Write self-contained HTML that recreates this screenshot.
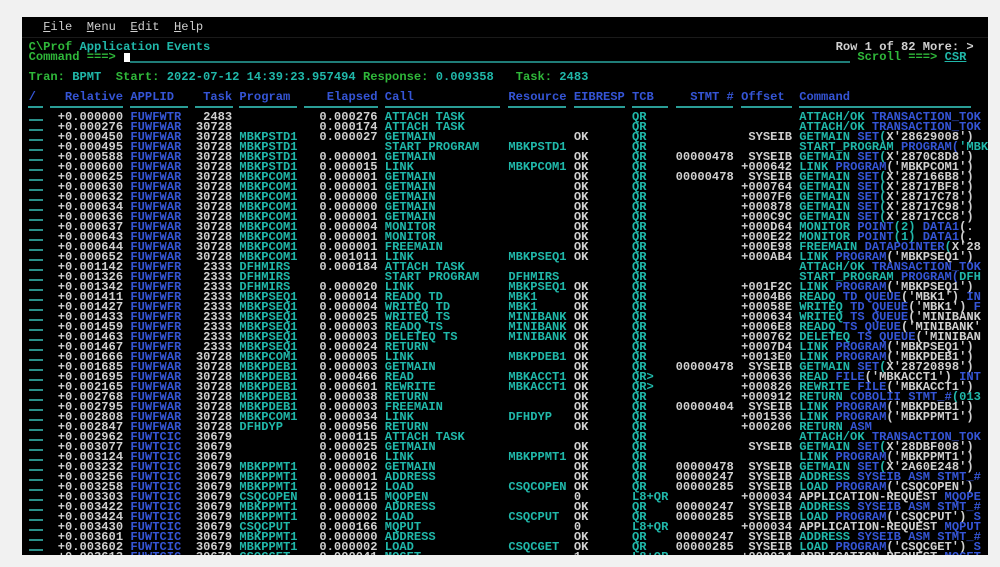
<!DOCTYPE html>
<html><head><meta charset="utf-8"><style>
html,body{margin:0;padding:0}
body{width:1000px;height:567px;background:#f1f1f1;overflow:hidden;position:relative}
#scr{position:absolute;left:22px;top:17px;width:966px;height:538px;background:#000;overflow:hidden;font-family:"Liberation Mono",monospace;font-size:12.12px;font-weight:bold;line-height:10px;color:#d0d0d0;white-space:pre}
#scr div,#scr span,#scr i{position:absolute}
.rw{left:0;width:966px;height:10px}
.g{color:#2fb83a}.k{color:#20b8aa}.bl{color:#3555d6}.w{color:#d0d0d0}
b{font-weight:bold;color:#3555d6}em{font-style:normal;color:#d0d0d0}
.mk{left:6.6px;top:7px;width:14px;height:2px;background:#2a8f89}
.r{left:35.7px;width:65.4px;text-align:right}
.a{left:108.4px;color:#3555d6}
.t{left:173.8px;width:36.4px;text-align:right}
.p{left:217.4px;color:#20b8aa}
.e{left:297.4px}
.c{left:362.8px;color:#20b8aa}
.rs{left:486.4px;color:#20b8aa}
.eb{left:551.9px}
.tc{left:610px;color:#20b8aa}
.s{left:653.6px}
.o{left:719.1px;width:50.9px;text-align:right}
.cm{left:777.2px;color:#20b8aa}
.ul{position:absolute;top:89px;height:2px;background:#2a9d96}
</style></head><body>
<div id="scr">
<div class="rw" style="top:5px;left:6.6px;color:#cfcfcf;font-weight:normal">  <u>F</u>ile  <u>M</u>enu  <u>E</u>dit  <u>H</u>elp</div>
<div style="left:0;top:20px;width:966px;height:1px;background:#1a1a1a"></div>
<div class="rw" style="top:25px;left:6.6px"><span class="g" style="left:0">C\Prof</span><span class="k" style="left:50.9px">Application Events</span></div>
<div class="rw" style="top:35px;left:6.6px"><span class="g" style="left:0">Command ===&gt;</span></div>
<div style="left:101.5px;top:36px;width:6px;height:9px;background:#fff"></div>
<div style="left:108px;top:44px;width:720px;height:2px;background:#1f7d78"></div>
<div class="rw" style="top:25px;left:813.6px">Row 1 of 82 More: &gt;</div>
<div class="rw" style="top:35px;left:835.4px"><span class="g" style="left:0">Scroll ===&gt;</span><span class="k" style="left:87.2px;text-decoration:underline">CSR</span></div>
<div class="rw" style="top:55px;left:6.6px"><span class="g" style="left:0">Tran:</span><span class="k" style="left:43.6px">BPMT</span><span class="g" style="left:87.2px">Start:</span><span class="k" style="left:138.1px">2022-07-12 14:39:23.957494</span><span class="g" style="left:334.4px">Response:</span><span class="k" style="left:407.1px">0.009358</span><span class="g" style="left:487.1px">Task:</span><span class="k" style="left:530.7px">2483</span></div>
<div class="rw bl" style="top:75px"><span style="left:6.6px">/</span><span style="left:42.9px">Relative</span><span style="left:108.4px">APPLID</span><span style="left:181.1px">Task</span><span style="left:217.4px">Program</span><span style="left:304.7px">Elapsed</span><span style="left:362.8px">Call</span><span style="left:486.4px">Resource</span><span style="left:551.9px">EIBRESP</span><span style="left:610px">TCB</span><span style="left:668.2px">STMT #</span><span style="left:719.1px">Offset</span><span style="left:777.2px">Command</span></div>
<div class="ul" style="left:6px;width:15px"></div>
<div class="ul" style="left:28px;width:73px"></div>
<div class="ul" style="left:108px;width:58px"></div>
<div class="ul" style="left:173px;width:38px"></div>
<div class="ul" style="left:217px;width:58px"></div>
<div class="ul" style="left:282px;width:74px"></div>
<div class="ul" style="left:363px;width:115px"></div>
<div class="ul" style="left:486px;width:58px"></div>
<div class="ul" style="left:552px;width:51px"></div>
<div class="ul" style="left:610px;width:36px"></div>
<div class="ul" style="left:654px;width:57px"></div>
<div class="ul" style="left:719px;width:51px"></div>
<div class="ul" style="left:777px;width:172px"></div>

<div class="rw" style="top:95px"><i class="mk"></i><span class="r">+0.000000</span><span class="a">FUWFWTR</span><span class="t">2483</span><span class="e">0.000276</span><span class="c">ATTACH TASK</span><span class="tc">QR</span><span class="cm">ATTACH/OK <b>TRANSACTION_TOK</b></span></div>
<div class="rw" style="top:105px"><i class="mk"></i><span class="r">+0.000276</span><span class="a">FUWFWAR</span><span class="t">30728</span><span class="e">0.000174</span><span class="c">ATTACH TASK</span><span class="tc">QR</span><span class="cm">ATTACH/OK <b>TRANSACTION_TOK</b></span></div>
<div class="rw" style="top:115px"><i class="mk"></i><span class="r">+0.000450</span><span class="a">FUWFWAR</span><span class="t">30728</span><span class="p">MBKPSTD1</span><span class="e">0.000027</span><span class="c">GETMAIN</span><span class="eb">OK</span><span class="tc">QR</span><span class="o">SYSEIB</span><span class="cm">GETMAIN <b>SET</b>(<em>X'28629008')</em></span></div>
<div class="rw" style="top:125px"><i class="mk"></i><span class="r">+0.000495</span><span class="a">FUWFWAR</span><span class="t">30728</span><span class="p">MBKPSTD1</span><span class="c">START PROGRAM</span><span class="rs">MBKPSTD1</span><span class="tc">QR</span><span class="cm">START_PROGRAM <b>PROGRAM(</b>'MBK</span></div>
<div class="rw" style="top:135px"><i class="mk"></i><span class="r">+0.000588</span><span class="a">FUWFWAR</span><span class="t">30728</span><span class="p">MBKPSTD1</span><span class="e">0.000001</span><span class="c">GETMAIN</span><span class="eb">OK</span><span class="tc">QR</span><span class="s">00000478</span><span class="o">SYSEIB</span><span class="cm">GETMAIN <b>SET</b>(<em>X'2870C8D8')</em></span></div>
<div class="rw" style="top:145px"><i class="mk"></i><span class="r">+0.000600</span><span class="a">FUWFWAR</span><span class="t">30728</span><span class="p">MBKPSTD1</span><span class="e">0.000015</span><span class="c">LINK</span><span class="rs">MBKPCOM1</span><span class="eb">OK</span><span class="tc">QR</span><span class="o">+000642</span><span class="cm">LINK <b>PROGRAM</b><em>('MBKPCOM1')</em></span></div>
<div class="rw" style="top:155px"><i class="mk"></i><span class="r">+0.000625</span><span class="a">FUWFWAR</span><span class="t">30728</span><span class="p">MBKPCOM1</span><span class="e">0.000001</span><span class="c">GETMAIN</span><span class="eb">OK</span><span class="tc">QR</span><span class="s">00000478</span><span class="o">SYSEIB</span><span class="cm">GETMAIN <b>SET</b>(<em>X'287166B8')</em></span></div>
<div class="rw" style="top:165px"><i class="mk"></i><span class="r">+0.000630</span><span class="a">FUWFWAR</span><span class="t">30728</span><span class="p">MBKPCOM1</span><span class="e">0.000001</span><span class="c">GETMAIN</span><span class="eb">OK</span><span class="tc">QR</span><span class="o">+000764</span><span class="cm">GETMAIN <b>SET</b>(<em>X'28717BF8')</em></span></div>
<div class="rw" style="top:175px"><i class="mk"></i><span class="r">+0.000632</span><span class="a">FUWFWAR</span><span class="t">30728</span><span class="p">MBKPCOM1</span><span class="e">0.000000</span><span class="c">GETMAIN</span><span class="eb">OK</span><span class="tc">QR</span><span class="o">+0007F6</span><span class="cm">GETMAIN <b>SET</b>(<em>X'28717C78')</em></span></div>
<div class="rw" style="top:185px"><i class="mk"></i><span class="r">+0.000634</span><span class="a">FUWFWAR</span><span class="t">30728</span><span class="p">MBKPCOM1</span><span class="e">0.000000</span><span class="c">GETMAIN</span><span class="eb">OK</span><span class="tc">QR</span><span class="o">+000878</span><span class="cm">GETMAIN <b>SET</b>(<em>X'28717C98')</em></span></div>
<div class="rw" style="top:195px"><i class="mk"></i><span class="r">+0.000636</span><span class="a">FUWFWAR</span><span class="t">30728</span><span class="p">MBKPCOM1</span><span class="e">0.000001</span><span class="c">GETMAIN</span><span class="eb">OK</span><span class="tc">QR</span><span class="o">+000C9C</span><span class="cm">GETMAIN <b>SET</b>(<em>X'28717CC8')</em></span></div>
<div class="rw" style="top:205px"><i class="mk"></i><span class="r">+0.000637</span><span class="a">FUWFWAR</span><span class="t">30728</span><span class="p">MBKPCOM1</span><span class="e">0.000004</span><span class="c">MONITOR</span><span class="eb">OK</span><span class="tc">QR</span><span class="o">+000D64</span><span class="cm">MONITOR <b>POINT</b>(2) <b>DATA1</b><em>(.</em></span></div>
<div class="rw" style="top:215px"><i class="mk"></i><span class="r">+0.000643</span><span class="a">FUWFWAR</span><span class="t">30728</span><span class="p">MBKPCOM1</span><span class="e">0.000001</span><span class="c">MONITOR</span><span class="eb">OK</span><span class="tc">QR</span><span class="o">+000E22</span><span class="cm">MONITOR <b>POINT</b>(1) <b>DATA1</b><em>(.</em></span></div>
<div class="rw" style="top:225px"><i class="mk"></i><span class="r">+0.000644</span><span class="a">FUWFWAR</span><span class="t">30728</span><span class="p">MBKPCOM1</span><span class="e">0.000001</span><span class="c">FREEMAIN</span><span class="eb">OK</span><span class="tc">QR</span><span class="o">+000E98</span><span class="cm">FREEMAIN <b>DATAPOINTER</b>(<em>X'28</em></span></div>
<div class="rw" style="top:235px"><i class="mk"></i><span class="r">+0.000652</span><span class="a">FUWFWAR</span><span class="t">30728</span><span class="p">MBKPCOM1</span><span class="e">0.001011</span><span class="c">LINK</span><span class="rs">MBKPSEQ1</span><span class="eb">OK</span><span class="tc">QR</span><span class="o">+000AB4</span><span class="cm">LINK <b>PROGRAM</b><em>('MBKPSEQ1')</em></span></div>
<div class="rw" style="top:245px"><i class="mk"></i><span class="r">+0.001142</span><span class="a">FUWFWFR</span><span class="t">2333</span><span class="p">DFHMIRS</span><span class="e">0.000184</span><span class="c">ATTACH TASK</span><span class="tc">QR</span><span class="cm">ATTACH/OK <b>TRANSACTION_TOK</b></span></div>
<div class="rw" style="top:255px"><i class="mk"></i><span class="r">+0.001326</span><span class="a">FUWFWFR</span><span class="t">2333</span><span class="p">DFHMIRS</span><span class="c">START PROGRAM</span><span class="rs">DFHMIRS</span><span class="tc">QR</span><span class="cm">START_PROGRAM <b>PROGRAM(</b>DFH</span></div>
<div class="rw" style="top:265px"><i class="mk"></i><span class="r">+0.001342</span><span class="a">FUWFWFR</span><span class="t">2333</span><span class="p">DFHMIRS</span><span class="e">0.000020</span><span class="c">LINK</span><span class="rs">MBKPSEQ1</span><span class="eb">OK</span><span class="tc">QR</span><span class="o">+001F2C</span><span class="cm">LINK <b>PROGRAM</b><em>('MBKPSEQ1')</em></span></div>
<div class="rw" style="top:275px"><i class="mk"></i><span class="r">+0.001411</span><span class="a">FUWFWFR</span><span class="t">2333</span><span class="p">MBKPSEQ1</span><span class="e">0.000014</span><span class="c">READQ TD</span><span class="rs">MBK1</span><span class="eb">OK</span><span class="tc">QR</span><span class="o">+0004B6</span><span class="cm">READQ <b>TD QUEUE</b><em>('MBK1')</em> <b>IN</b></span></div>
<div class="rw" style="top:285px"><i class="mk"></i><span class="r">+0.001427</span><span class="a">FUWFWFR</span><span class="t">2333</span><span class="p">MBKPSEQ1</span><span class="e">0.000004</span><span class="c">WRITEQ TD</span><span class="rs">MBK1</span><span class="eb">OK</span><span class="tc">QR</span><span class="o">+00058E</span><span class="cm">WRITEQ <b>TD QUEUE</b><em>('MBK1')</em> <b>F</b></span></div>
<div class="rw" style="top:295px"><i class="mk"></i><span class="r">+0.001433</span><span class="a">FUWFWFR</span><span class="t">2333</span><span class="p">MBKPSEQ1</span><span class="e">0.000025</span><span class="c">WRITEQ TS</span><span class="rs">MINIBANK</span><span class="eb">OK</span><span class="tc">QR</span><span class="o">+000634</span><span class="cm">WRITEQ <b>TS QUEUE</b><em>('MINIBANK</em></span></div>
<div class="rw" style="top:305px"><i class="mk"></i><span class="r">+0.001459</span><span class="a">FUWFWFR</span><span class="t">2333</span><span class="p">MBKPSEQ1</span><span class="e">0.000003</span><span class="c">READQ TS</span><span class="rs">MINIBANK</span><span class="eb">OK</span><span class="tc">QR</span><span class="o">+0006E8</span><span class="cm">READQ <b>TS QUEUE</b><em>('MINIBANK'</em></span></div>
<div class="rw" style="top:315px"><i class="mk"></i><span class="r">+0.001463</span><span class="a">FUWFWFR</span><span class="t">2333</span><span class="p">MBKPSEQ1</span><span class="e">0.000003</span><span class="c">DELETEQ TS</span><span class="rs">MINIBANK</span><span class="eb">OK</span><span class="tc">QR</span><span class="o">+000762</span><span class="cm">DELETEQ <b>TS QUEUE</b><em>('MINIBAN</em></span></div>
<div class="rw" style="top:325px"><i class="mk"></i><span class="r">+0.001467</span><span class="a">FUWFWFR</span><span class="t">2333</span><span class="p">MBKPSEQ1</span><span class="e">0.000024</span><span class="c">RETURN</span><span class="eb">OK</span><span class="tc">QR</span><span class="o">+0007D4</span><span class="cm">LINK <b>PROGRAM</b><em>('MBKPSEQ1')</em></span></div>
<div class="rw" style="top:335px"><i class="mk"></i><span class="r">+0.001666</span><span class="a">FUWFWAR</span><span class="t">30728</span><span class="p">MBKPCOM1</span><span class="e">0.000005</span><span class="c">LINK</span><span class="rs">MBKPDEB1</span><span class="eb">OK</span><span class="tc">QR</span><span class="o">+0013E0</span><span class="cm">LINK <b>PROGRAM</b><em>('MBKPDEB1')</em></span></div>
<div class="rw" style="top:345px"><i class="mk"></i><span class="r">+0.001685</span><span class="a">FUWFWAR</span><span class="t">30728</span><span class="p">MBKPDEB1</span><span class="e">0.000003</span><span class="c">GETMAIN</span><span class="eb">OK</span><span class="tc">QR</span><span class="s">00000478</span><span class="o">SYSEIB</span><span class="cm">GETMAIN <b>SET</b>(<em>X'28720898')</em></span></div>
<div class="rw" style="top:355px"><i class="mk"></i><span class="r">+0.001695</span><span class="a">FUWFWAR</span><span class="t">30728</span><span class="p">MBKPDEB1</span><span class="e">0.000466</span><span class="c">READ</span><span class="rs">MBKACCT1</span><span class="eb">OK</span><span class="tc">QR&gt;</span><span class="o">+000636</span><span class="cm">READ <b>FILE</b><em>('MBKACCT1')</em> <b>INT</b></span></div>
<div class="rw" style="top:365px"><i class="mk"></i><span class="r">+0.002165</span><span class="a">FUWFWAR</span><span class="t">30728</span><span class="p">MBKPDEB1</span><span class="e">0.000601</span><span class="c">REWRITE</span><span class="rs">MBKACCT1</span><span class="eb">OK</span><span class="tc">QR&gt;</span><span class="o">+000826</span><span class="cm">REWRITE <b>FILE</b><em>('MBKACCT1')</em></span></div>
<div class="rw" style="top:375px"><i class="mk"></i><span class="r">+0.002768</span><span class="a">FUWFWAR</span><span class="t">30728</span><span class="p">MBKPDEB1</span><span class="e">0.000038</span><span class="c">RETURN</span><span class="eb">OK</span><span class="tc">QR</span><span class="o">+000912</span><span class="cm">RETURN <b>COBOLII STMT_#</b>(013</span></div>
<div class="rw" style="top:385px"><i class="mk"></i><span class="r">+0.002795</span><span class="a">FUWFWAR</span><span class="t">30728</span><span class="p">MBKPDEB1</span><span class="e">0.000003</span><span class="c">FREEMAIN</span><span class="eb">OK</span><span class="tc">QR</span><span class="s">00000404</span><span class="o">SYSEIB</span><span class="cm">LINK <b>PROGRAM</b><em>('MBKPDEB1')</em></span></div>
<div class="rw" style="top:395px"><i class="mk"></i><span class="r">+0.002808</span><span class="a">FUWFWAR</span><span class="t">30728</span><span class="p">MBKPCOM1</span><span class="e">0.000034</span><span class="c">LINK</span><span class="rs">DFHDYP</span><span class="eb">OK</span><span class="tc">QR</span><span class="o">+001536</span><span class="cm">LINK <b>PROGRAM</b><em>('MBKPPMT1')</em></span></div>
<div class="rw" style="top:405px"><i class="mk"></i><span class="r">+0.002847</span><span class="a">FUWFWAR</span><span class="t">30728</span><span class="p">DFHDYP</span><span class="e">0.000956</span><span class="c">RETURN</span><span class="eb">OK</span><span class="tc">QR</span><span class="o">+000206</span><span class="cm">RETURN <b>ASM</b></span></div>
<div class="rw" style="top:415px"><i class="mk"></i><span class="r">+0.002962</span><span class="a">FUWTCIC</span><span class="t">30679</span><span class="e">0.000115</span><span class="c">ATTACH TASK</span><span class="tc">QR</span><span class="cm">ATTACH/OK <b>TRANSACTION_TOK</b></span></div>
<div class="rw" style="top:425px"><i class="mk"></i><span class="r">+0.003077</span><span class="a">FUWTCIC</span><span class="t">30679</span><span class="e">0.000025</span><span class="c">GETMAIN</span><span class="eb">OK</span><span class="tc">QR</span><span class="o">SYSEIB</span><span class="cm">GETMAIN <b>SET</b>(<em>X'28DBF008')</em></span></div>
<div class="rw" style="top:435px"><i class="mk"></i><span class="r">+0.003124</span><span class="a">FUWTCIC</span><span class="t">30679</span><span class="e">0.000016</span><span class="c">LINK</span><span class="rs">MBKPPMT1</span><span class="eb">OK</span><span class="tc">QR</span><span class="cm">LINK <b>PROGRAM</b><em>('MBKPPMT1')</em></span></div>
<div class="rw" style="top:445px"><i class="mk"></i><span class="r">+0.003232</span><span class="a">FUWTCIC</span><span class="t">30679</span><span class="p">MBKPPMT1</span><span class="e">0.000002</span><span class="c">GETMAIN</span><span class="eb">OK</span><span class="tc">QR</span><span class="s">00000478</span><span class="o">SYSEIB</span><span class="cm">GETMAIN <b>SET</b>(<em>X'2A60E248')</em></span></div>
<div class="rw" style="top:455px"><i class="mk"></i><span class="r">+0.003256</span><span class="a">FUWTCIC</span><span class="t">30679</span><span class="p">MBKPPMT1</span><span class="e">0.000001</span><span class="c">ADDRESS</span><span class="eb">OK</span><span class="tc">QR</span><span class="s">00000247</span><span class="o">SYSEIB</span><span class="cm">ADDRESS <b>SYSEIB ASM STMT_#</b></span></div>
<div class="rw" style="top:465px"><i class="mk"></i><span class="r">+0.003258</span><span class="a">FUWTCIC</span><span class="t">30679</span><span class="p">MBKPPMT1</span><span class="e">0.000012</span><span class="c">LOAD</span><span class="rs">CSQCOPEN</span><span class="eb">OK</span><span class="tc">QR</span><span class="s">00000285</span><span class="o">SYSEIB</span><span class="cm">LOAD <b>PROGRAM</b><em>('CSQCOPEN')</em></span></div>
<div class="rw" style="top:475px"><i class="mk"></i><span class="r">+0.003303</span><span class="a">FUWTCIC</span><span class="t">30679</span><span class="p">CSQCOPEN</span><span class="e">0.000115</span><span class="c">MQOPEN</span><span class="eb">0</span><span class="tc">L8+QR</span><span class="o">+000034</span><span class="cm"><em>APPLICATION-REQUEST</em> <b>MQOPE</b></span></div>
<div class="rw" style="top:485px"><i class="mk"></i><span class="r">+0.003422</span><span class="a">FUWTCIC</span><span class="t">30679</span><span class="p">MBKPPMT1</span><span class="e">0.000000</span><span class="c">ADDRESS</span><span class="eb">OK</span><span class="tc">QR</span><span class="s">00000247</span><span class="o">SYSEIB</span><span class="cm">ADDRESS <b>SYSEIB ASM STMT_#</b></span></div>
<div class="rw" style="top:495px"><i class="mk"></i><span class="r">+0.003424</span><span class="a">FUWTCIC</span><span class="t">30679</span><span class="p">MBKPPMT1</span><span class="e">0.000002</span><span class="c">LOAD</span><span class="rs">CSQCPUT</span><span class="eb">OK</span><span class="tc">QR</span><span class="s">00000285</span><span class="o">SYSEIB</span><span class="cm">LOAD <b>PROGRAM</b><em>('CSQCPUT')</em> <b>S</b></span></div>
<div class="rw" style="top:505px"><i class="mk"></i><span class="r">+0.003430</span><span class="a">FUWTCIC</span><span class="t">30679</span><span class="p">CSQCPUT</span><span class="e">0.000166</span><span class="c">MQPUT</span><span class="eb">0</span><span class="tc">L8+QR</span><span class="o">+000034</span><span class="cm"><em>APPLICATION-REQUEST</em> <b>MQPUT</b></span></div>
<div class="rw" style="top:515px"><i class="mk"></i><span class="r">+0.003601</span><span class="a">FUWTCIC</span><span class="t">30679</span><span class="p">MBKPPMT1</span><span class="e">0.000000</span><span class="c">ADDRESS</span><span class="eb">OK</span><span class="tc">QR</span><span class="s">00000247</span><span class="o">SYSEIB</span><span class="cm">ADDRESS <b>SYSEIB ASM STMT_#</b></span></div>
<div class="rw" style="top:525px"><i class="mk"></i><span class="r">+0.003602</span><span class="a">FUWTCIC</span><span class="t">30679</span><span class="p">MBKPPMT1</span><span class="e">0.000002</span><span class="c">LOAD</span><span class="rs">CSQCGET</span><span class="eb">OK</span><span class="tc">QR</span><span class="s">00000285</span><span class="o">SYSEIB</span><span class="cm">LOAD <b>PROGRAM</b><em>('CSQCGET')</em> <b>S</b></span></div>
<div class="rw" style="top:535px"><i class="mk"></i><span class="r">+0.003613</span><span class="a">FUWTCIC</span><span class="t">30679</span><span class="p">CSQCGET</span><span class="e">0.000041</span><span class="c">MQGET</span><span class="eb">1</span><span class="tc">L8+QR</span><span class="o">+000034</span><span class="cm"><em>APPLICATION-REQUEST</em> <b>MQGET</b></span></div>
</div>
</body></html>
